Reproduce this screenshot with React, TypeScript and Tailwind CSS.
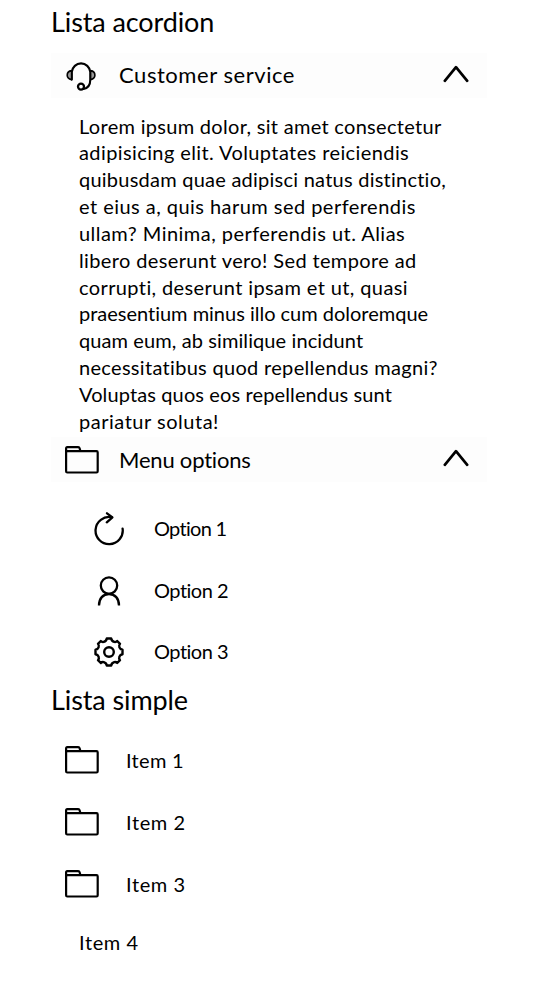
import type { ReactNode } from "react";

const stroke = {
  fill: "none",
  stroke: "currentColor",
  strokeLinecap: "round",
  strokeLinejoin: "round",
} as const;

function HeadsetIcon() {
  return (
    <svg width="30" height="30" viewBox="0 0 30 30" {...stroke} strokeWidth="2.1">
      <path d="M5.8 18.6V11A9.3 9.6 0 0 1 24.3 11V18.5C24.3 23.4 21.8 27.2 17.6 28" />
      <path d="M5.6 9.6C2.8 10 1.2 12 1.2 14.2S2.8 18 5.6 18.6Z" fill="#999" strokeWidth="1.6" />
      <path d="M24.6 9.6C27.4 10 28.9 12 28.9 14.2S27.4 18 24.6 18.6Z" fill="#999" strokeWidth="1.6" />
      <circle cx="15" cy="25.6" r="3" strokeWidth="2.3" />
    </svg>
  );
}

function FolderIcon() {
  return (
    <svg width="34" height="28" viewBox="0 0 34 28" {...stroke} strokeWidth="2.2">
      <rect x="1.1" y="5.2" width="31.6" height="21.3" rx="1.2" />
      <path d="M1.1 6V2.4C1.1 1.6 1.5 1.2 2.2 1.2H13.2C14 1.2 14.4 1.5 14.6 2.2L15.4 5" />
    </svg>
  );
}

function ChevronUpIcon() {
  return (
    <svg width="26" height="18" viewBox="0 0 26 18" {...stroke} strokeWidth="2.7">
      <path d="M1.8 15.8L13 2.2L24.2 15.8" />
    </svg>
  );
}

function RefreshIcon() {
  return (
    <svg width="30" height="34" viewBox="0 0 30 34" {...stroke} strokeWidth="2.3">
      <path d="M28.6 16.6A13.6 13.6 0 1 1 17.6 5.2" />
      <path d="M13 1.3L18.4 5.4L12.8 10.3" />
    </svg>
  );
}

function UserIcon() {
  return (
    <svg width="24" height="30" viewBox="0 0 24 30" {...stroke} strokeWidth="2.3" strokeLinecap="butt">
      <circle cx="12" cy="9.6" r="8.2" />
      <path d="M2 29.5C2 22.5 6 18 12 18S22 22.5 22 29.5" />
    </svg>
  );
}

function GearIcon() {
  return (
    <svg width="30" height="30" viewBox="0 0 30 30" {...stroke} strokeWidth="2.4">
      <circle cx="15" cy="15" r="4.8" />
      <path d="M12.8 1.5H17.2Q17.6 4.1 20.2 4.9Q22.2 5.3 23.2 4L26 6.8Q24.6 8.4 25.4 10.4Q26.2 12.4 28.5 12.8V17.2Q26.2 17.6 25.4 19.6Q24.6 21.6 26 23.2L23.2 26Q22.2 24.7 20.2 25.1Q17.6 25.9 17.2 28.5H12.8Q12.4 25.9 9.8 25.1Q7.8 24.7 6.8 26L4 23.2Q5.4 21.6 4.6 19.6Q3.8 17.6 1.5 17.2V12.8Q3.8 12.4 4.6 10.4Q5.4 8.4 4 6.8L6.8 4Q7.8 5.3 9.8 4.9Q12.4 4.1 12.8 1.5Z" />
    </svg>
  );
}

function AccordionHeader({ icon, children }: { icon: ReactNode; children: ReactNode }) {
  return (
    <button className="flex h-[45px] w-full items-center bg-[#fdfdfd] pr-[18px] pl-[14px] text-left text-[22px]">
      <span className="flex w-[54px] shrink-0">{icon}</span>
      <span className="flex-1 whitespace-nowrap">{children}</span>
      <span className="mb-[3px]">
        <ChevronUpIcon />
      </span>
    </button>
  );
}

const paragraph = [
  { text: "Lorem ipsum dolor, sit amet consectetur", tracking: "tracking-[0.3px]" },
  { text: "adipisicing elit. Voluptates reiciendis", tracking: "tracking-[0.4px]" },
  { text: "quibusdam quae adipisci natus distinctio,", tracking: "tracking-[0.24px]" },
  { text: "et eius a, quis harum sed perferendis", tracking: "tracking-[0.46px]" },
  { text: "ullam? Minima, perferendis ut. Alias", tracking: "tracking-[0.46px]" },
  { text: "libero deserunt vero! Sed tempore ad", tracking: "tracking-[0.37px]" },
  { text: "corrupti, deserunt ipsam et ut, quasi", tracking: "tracking-[0.39px]" },
  { text: "praesentium minus illo cum doloremque", tracking: "tracking-[-0.01px]" },
  { text: "quam eum, ab similique incidunt", tracking: "tracking-[0.1px]" },
  { text: "necessitatibus quod repellendus magni?", tracking: "tracking-[0.31px]" },
  { text: "Voluptas quos eos repellendus sunt", tracking: "tracking-[0.12px]" },
  { text: "pariatur soluta!", tracking: "tracking-[0.52px]" },
];

const options = [
  { label: "Option 1", icon: <RefreshIcon />, tracking: "tracking-[-0.7px]" },
  { label: "Option 2", icon: <UserIcon />, tracking: "tracking-[-0.5px]" },
  { label: "Option 3", icon: <GearIcon />, tracking: "tracking-[-0.5px]" },
];

const items = [
  { label: "Item 1", tracking: "tracking-[0.3px]" },
  { label: "Item 2", tracking: "tracking-[0.6px]" },
  { label: "Item 3", tracking: "tracking-[0.6px]" },
];

export default function App() {
  return (
    <main className="h-[992px] w-[536px] overflow-hidden bg-white pl-[51px] font-[Lato,'Noto_Sans',sans-serif] text-[20px] text-black">
      <div className="w-[436px]">
        <h1 className="h-[53px] text-[27px] leading-[43px] tracking-[-0.1px]">Lista acordion</h1>

        <section>
          <AccordionHeader
            icon={
              <span className="pl-px">
                <HeadsetIcon />
              </span>
            }
          >
            <span className="relative -top-px tracking-[0.55px]">Customer service</span>
          </AccordionHeader>
          <p className="h-[339px] pt-[14.5px] pl-[28px] leading-[26.85px]">
            {paragraph.map((line) => (
              <span key={line.text} className={`block whitespace-nowrap ${line.tracking}`}>
                {line.text}
              </span>
            ))}
          </p>
        </section>

        <section>
          <AccordionHeader icon={<FolderIcon />}>
            <span className="tracking-[-0.2px]">Menu options</span>
          </AccordionHeader>
          <ul className="pt-[16px]">
            {options.map((option) => (
              <li key={option.label} className="flex h-[61.7px] items-center">
                <span className="flex w-[103px] justify-center pl-[13px]">{option.icon}</span>
                <span className={`pb-[2px] ${option.tracking}`}>{option.label}</span>
              </li>
            ))}
          </ul>
        </section>

        <h2 className="h-[46px] text-[27px] leading-[33px] tracking-[-0.1px]">Lista simple</h2>
        <ul>
          {items.map((item) => (
            <li key={item.label} className="flex h-[62px] items-center pl-[14px]">
              <span className="w-[61px] shrink-0">
                <FolderIcon />
              </span>
              <span className={`pb-px ${item.tracking}`}>{item.label}</span>
            </li>
          ))}
          <li className="flex h-[54px] items-center pl-[28px] tracking-[0.6px]">Item 4</li>
        </ul>
      </div>
    </main>
  );
}
